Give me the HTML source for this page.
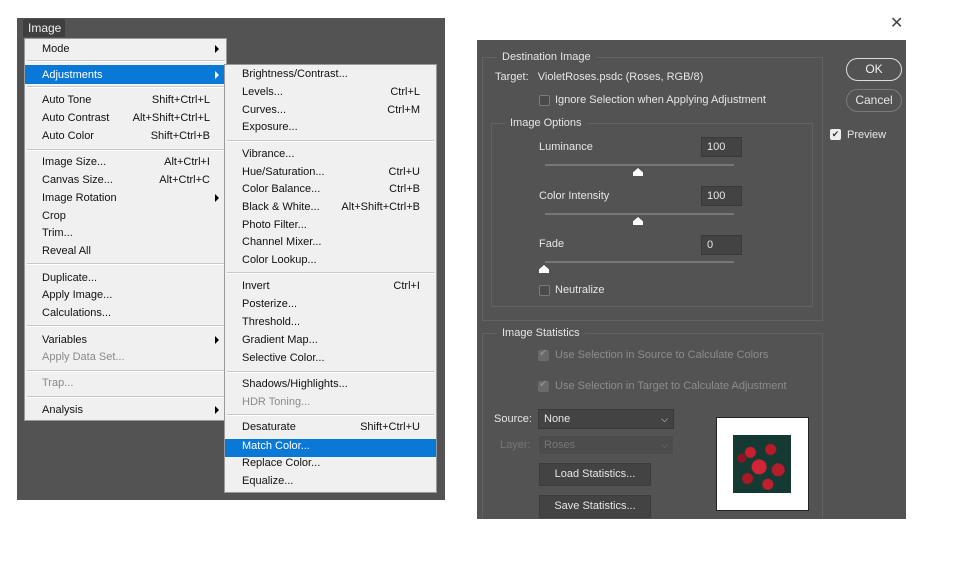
<!DOCTYPE html>
<html><head><meta charset="utf-8"><style>
*{margin:0;padding:0;box-sizing:border-box}
body{width:956px;height:567px;background:#fff;position:relative;overflow:hidden;font-family:"Liberation Sans",sans-serif;font-size:11px}
.a{position:absolute;white-space:nowrap;line-height:14px}
.m{color:#111}
.g{color:#8a8a8a}
.r{text-align:right}
.sep{position:absolute;height:2px;border-top:1px solid #c8c8c8;border-bottom:1px solid #fff}
.arr{position:absolute;width:0;height:0;border-top:4px solid transparent;border-bottom:4px solid transparent;border-left:4px solid #000}
.d{color:#e6e6e6}
.dd{color:#8c8c8c}
.fs{position:absolute;border:1px solid #626262}
.lg{position:absolute;background:#535353;padding:0 5px;color:#e6e6e6;line-height:14px}
.inp{position:absolute;background:#434343;border:1px solid #3a3a3a;color:#e6e6e6;padding-left:5px;line-height:18px}
.trk{position:absolute;height:2px;background:#777}
.th{position:absolute;width:10px;height:8px;background:#fff;clip-path:polygon(50% 0,100% 55%,100% 100%,0 100%,0 55%)}
.cb{position:absolute;width:11px;height:11px;border:1px solid #7a7a7a;border-radius:2px;background:#4a4a4a}
.btn{position:absolute;background:#434343;border:1px solid #3c3c3c;color:#e6e6e6;text-align:center;line-height:20px;font-size:11px}
</style></head><body>
<!-- left panel -->
<div style="position:absolute;left:17px;top:18px;width:428px;height:482px;background:#535353"></div>
<div class="a" style="left:23px;top:19px;width:42px;height:18px;background:#3f3f3f;color:#eee;line-height:18px;padding-left:5px;border-radius:2px 2px 0 0;font-size:12px">Image</div>
<div style="position:absolute;left:24px;top:38px;width:203px;height:383px;background:#f0f0f0;border:1px solid #999"></div>
<div style="position:absolute;left:25px;top:65px;width:201px;height:19px;background:#0a78d7"></div>
<div class="sep" style="left:27px;top:60px;width:198px"></div>
<div class="sep" style="left:27px;top:86px;width:198px"></div>
<div class="sep" style="left:27px;top:149px;width:198px"></div>
<div class="sep" style="left:27px;top:263px;width:198px"></div>
<div class="sep" style="left:27px;top:325px;width:198px"></div>
<div class="sep" style="left:27px;top:370px;width:198px"></div>
<div class="sep" style="left:27px;top:396px;width:198px"></div>
<div class="arr" style="left:215px;top:45px"></div>
<div class="arr" style="left:215px;top:71px;border-left-color:#fff"></div>
<div class="arr" style="left:215px;top:194px"></div>
<div class="arr" style="left:215px;top:336px"></div>
<div class="arr" style="left:215px;top:406px"></div>
<div class="a m" style="left:42px;top:42px">Mode</div>
<div class="a" style="left:42px;top:68px;color:#fff">Adjustments</div>
<div class="a m" style="left:42px;top:93px">Auto Tone</div><div class="a m r" style="left:110px;width:100px;top:93px">Shift+Ctrl+L</div>
<div class="a m" style="left:42px;top:111px">Auto Contrast</div><div class="a m r" style="left:110px;width:100px;top:111px">Alt+Shift+Ctrl+L</div>
<div class="a m" style="left:42px;top:129px">Auto Color</div><div class="a m r" style="left:110px;width:100px;top:129px">Shift+Ctrl+B</div>
<div class="a m" style="left:42px;top:155px">Image Size...</div><div class="a m r" style="left:110px;width:100px;top:155px">Alt+Ctrl+I</div>
<div class="a m" style="left:42px;top:173px">Canvas Size...</div><div class="a m r" style="left:110px;width:100px;top:173px">Alt+Ctrl+C</div>
<div class="a m" style="left:42px;top:191px">Image Rotation</div>
<div class="a m" style="left:42px;top:209px">Crop</div>
<div class="a m" style="left:42px;top:226px">Trim...</div>
<div class="a m" style="left:42px;top:244px">Reveal All</div>
<div class="a m" style="left:42px;top:271px">Duplicate...</div>
<div class="a m" style="left:42px;top:288px">Apply Image...</div>
<div class="a m" style="left:42px;top:306px">Calculations...</div>
<div class="a m" style="left:42px;top:333px">Variables</div>
<div class="a g" style="left:42px;top:350px">Apply Data Set...</div>
<div class="a g" style="left:42px;top:376px">Trap...</div>
<div class="a m" style="left:42px;top:403px">Analysis</div>
<!-- submenu -->
<div style="position:absolute;left:224px;top:64px;width:213px;height:429px;background:#f0f0f0;border:1px solid #999"></div>
<div style="position:absolute;left:225px;top:439px;width:211px;height:18px;background:#0a78d7"></div>
<div class="sep" style="left:227px;top:140px;width:207px"></div>
<div class="sep" style="left:227px;top:272px;width:207px"></div>
<div class="sep" style="left:227px;top:371px;width:207px"></div>
<div class="sep" style="left:227px;top:414px;width:207px"></div>
<div class="a m" style="left:242px;top:67px">Brightness/Contrast...</div>
<div class="a m" style="left:242px;top:85px">Levels...</div><div class="a m r" style="left:320px;width:100px;top:85px">Ctrl+L</div>
<div class="a m" style="left:242px;top:103px">Curves...</div><div class="a m r" style="left:320px;width:100px;top:103px">Ctrl+M</div>
<div class="a m" style="left:242px;top:120px">Exposure...</div>
<div class="a m" style="left:242px;top:147px">Vibrance...</div>
<div class="a m" style="left:242px;top:165px">Hue/Saturation...</div><div class="a m r" style="left:320px;width:100px;top:165px">Ctrl+U</div>
<div class="a m" style="left:242px;top:182px">Color Balance...</div><div class="a m r" style="left:320px;width:100px;top:182px">Ctrl+B</div>
<div class="a m" style="left:242px;top:200px">Black &amp; White...</div><div class="a m r" style="left:320px;width:100px;top:200px">Alt+Shift+Ctrl+B</div>
<div class="a m" style="left:242px;top:218px">Photo Filter...</div>
<div class="a m" style="left:242px;top:235px">Channel Mixer...</div>
<div class="a m" style="left:242px;top:253px">Color Lookup...</div>
<div class="a m" style="left:242px;top:279px">Invert</div><div class="a m r" style="left:320px;width:100px;top:279px">Ctrl+I</div>
<div class="a m" style="left:242px;top:297px">Posterize...</div>
<div class="a m" style="left:242px;top:315px">Threshold...</div>
<div class="a m" style="left:242px;top:333px">Gradient Map...</div>
<div class="a m" style="left:242px;top:351px">Selective Color...</div>
<div class="a m" style="left:242px;top:377px">Shadows/Highlights...</div>
<div class="a g" style="left:242px;top:395px">HDR Toning...</div>
<div class="a m" style="left:242px;top:420px">Desaturate</div><div class="a m r" style="left:320px;width:100px;top:420px">Shift+Ctrl+U</div>
<div class="a" style="left:242px;top:439px;color:#fff">Match Color...</div>
<div class="a m" style="left:242px;top:456px">Replace Color...</div>
<div class="a m" style="left:242px;top:474px">Equalize...</div>
<!-- dialog -->
<div class="a" style="left:890px;top:17px;font-size:16px;color:#444">✕</div>
<div style="position:absolute;left:477px;top:40px;width:429px;height:479px;background:#535353;overflow:hidden"></div>
<div class="fs" style="left:482px;top:57px;width:341px;height:264px"></div>
<div class="lg" style="left:497px;top:50px">Destination Image</div>
<div class="a d" style="left:495px;top:70px">Target:&nbsp;&nbsp; VioletRoses.psdc (Roses, RGB/8)</div>
<div class="cb" style="left:539px;top:95px"></div>
<div class="a d" style="left:555px;top:93px">Ignore Selection when Applying Adjustment</div>
<div class="fs" style="left:491px;top:123px;width:322px;height:184px"></div>
<div class="lg" style="left:505px;top:116px">Image Options</div>
<div class="a d" style="left:539px;top:140px">Luminance</div>
<div class="inp" style="left:701px;top:137px;width:41px;height:20px">100</div>
<div class="trk" style="left:545px;top:164px;width:189px"></div>
<div class="th" style="left:633px;top:168px"></div>
<div class="a d" style="left:539px;top:189px">Color Intensity</div>
<div class="inp" style="left:701px;top:186px;width:41px;height:20px">100</div>
<div class="trk" style="left:545px;top:213px;width:189px"></div>
<div class="th" style="left:633px;top:217px"></div>
<div class="a d" style="left:539px;top:237px">Fade</div>
<div class="inp" style="left:701px;top:235px;width:41px;height:20px">0</div>
<div class="trk" style="left:545px;top:261px;width:189px"></div>
<div class="th" style="left:539px;top:265px"></div>
<div class="cb" style="left:539px;top:285px"></div>
<div class="a d" style="left:555px;top:283px">Neutralize</div>
<div class="fs" style="left:482px;top:333px;width:341px;height:186px;border-bottom:none"></div>
<div class="lg" style="left:497px;top:326px">Image Statistics</div>
<div class="cb" style="left:538px;top:350px;background:#6a6a6a;border-color:#6a6a6a"></div>
<div class="a" style="left:539px;top:347px;color:#8c8c8c;font-size:10px">✔</div>
<div class="a dd" style="left:555px;top:348px">Use Selection in Source to Calculate Colors</div>
<div class="cb" style="left:538px;top:381px;background:#6a6a6a;border-color:#6a6a6a"></div>
<div class="a" style="left:539px;top:378px;color:#8c8c8c;font-size:10px">✔</div>
<div class="a dd" style="left:555px;top:379px">Use Selection in Target to Calculate Adjustment</div>
<div class="a d" style="left:494px;top:412px">Source:</div>
<div class="inp" style="left:538px;top:409px;width:136px;height:20px">None<span style="position:absolute;right:5px;top:0;font-size:9px">⌵</span></div>
<div class="a dd" style="left:500px;top:438px;color:#777">Layer:</div>
<div class="inp" style="left:538px;top:435px;width:136px;height:20px;color:#777;background:#4c4c4c;border-color:#555">Roses<span style="position:absolute;right:5px;top:0;font-size:9px">⌵</span></div>
<div class="btn" style="left:539px;top:463px;width:112px;height:23px">Load Statistics...</div>
<div class="btn" style="left:539px;top:495px;width:112px;height:23px">Save Statistics...</div>
<div style="position:absolute;left:716px;top:417px;width:93px;height:94px;background:#fff;border:1px solid #222"></div>
<div style="position:absolute;left:733px;top:435px;width:58px;height:58px;background:radial-gradient(circle at 30% 30%,#c8202e 0 5px,transparent 6px),radial-gradient(circle at 65% 25%,#b81a28 0 5px,transparent 6px),radial-gradient(circle at 45% 55%,#d12434 0 7px,transparent 8px),radial-gradient(circle at 78% 60%,#b51d2c 0 6px,transparent 7px),radial-gradient(circle at 25% 75%,#a81826 0 5px,transparent 6px),radial-gradient(circle at 60% 85%,#c11f2e 0 5px,transparent 6px),radial-gradient(circle at 15% 40%,#8f1420 0 4px,transparent 5px),#143a33"></div>
<div style="position:absolute;left:846px;top:58px;width:56px;height:23px;border:1px solid #ddd;border-radius:12px;color:#f0f0f0;text-align:center;line-height:21px;font-size:12px">OK</div>
<div style="position:absolute;left:846px;top:89px;width:56px;height:23px;border:1px solid #7a7a7a;border-radius:12px;color:#e6e6e6;text-align:center;line-height:21px;font-size:12px">Cancel</div>
<div style="position:absolute;left:830px;top:129px;width:11px;height:11px;background:#eee;border-radius:2px;color:#333;font-size:9px;line-height:11px;text-align:center">✔</div>
<div class="a d" style="left:847px;top:128px">Preview</div>
</body></html>
